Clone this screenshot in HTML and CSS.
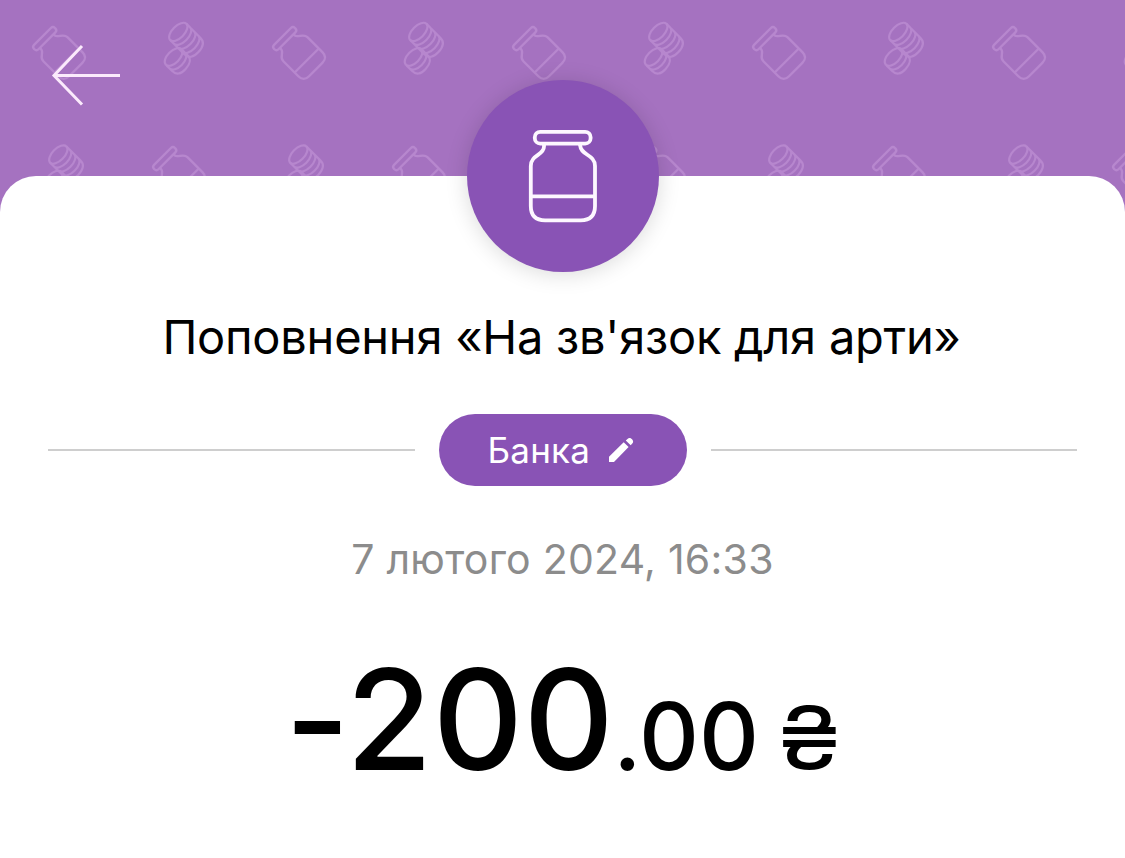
FILE: index.html
```html
<!DOCTYPE html>
<html lang="uk">
<head>
<meta charset="utf-8">
<title>Поповнення банки</title>
<link rel="stylesheet" href="styles.css">
</head>
<body>
<main class="screen">
  <svg class="backdrop" width="1125" height="240" viewBox="0 0 1125 240" aria-hidden="true">
    <defs>
      <g id="jar">
        <rect x="67.8" y="51.8" width="55.8" height="11.8" rx="5.4"/>
        <path d="M77 64v2.500c0 9-13.200 8-13.200 19.500v40q0 14.300 14.300 14.300h35.600q14.300 0 14.300-14.300V86c0-11.500-14-11-14.600-19.500l-.6-2.500M63.800 116.300H128"/>
      </g>
      <g id="stack-tall">
        <ellipse rx="6" ry="11.500"/>
        <path d="M0-11.500H20Q28-11.500 28.500 0T20 11.500H0M5.400-11.500a6 11.500 0 0 1 0 23M11.200-11.500a6 11.500 0 0 1 0 23M17-11.500a6 11.500 0 0 1 0 23"/>
      </g>
      <g id="stack-short">
        <ellipse rx="6" ry="11"/>
        <path d="M1-11H9Q16.500-11 17 0T9 11H1M5.500-11a6 11 0 0 1 0 22"/>
      </g>
      <g id="coins">
        <use href="#stack-tall" transform="rotate(45)"/>
        <use href="#stack-short" transform="translate(-4.7 25) rotate(45)"/>
      </g>
      <pattern id="motif" width="240" height="240" patternUnits="userSpaceOnUse">
        <g class="motif-lines">
          <use href="#jar" class="motif-jar" transform="translate(59.200 53) rotate(-45) scale(.53) translate(-95.9 -96.2)"/>
          <use href="#jar" class="motif-jar" transform="translate(179.200 173) rotate(-45) scale(.53) translate(-95.9 -96.2)"/>
          <use href="#coins" transform="translate(178.300 31.900)"/>
          <use href="#coins" transform="translate(58.300 154.600)"/>
        </g>
      </pattern>
    </defs>
    <rect width="1125" height="240" fill="url(#motif)"/>
  </svg>
  <header class="header">
    <svg class="back" width="70" height="64" viewBox="0 0 70 64" role="img" aria-label="Назад">
      <path d="M70 32.5H4M32 3L4 32.5 32 61.500"/>
    </svg>
  </header>
  <section class="card">
    <div class="avatar">
      <svg class="avatar-icon" width="192" height="192" viewBox="0 0 192 192" aria-hidden="true"><use href="#jar"/></svg>
    </div>
    <h1 class="title">Поповнення «На зв'язок для арти»</h1>
    <div class="category">
      <span class="rule"></span>
      <span class="pill">
        <span class="pill-label">Банка</span>
        <svg class="pencil" width="26" height="26" viewBox="0 0 26 26" aria-hidden="true">
          <path d="M1 25v-5.300L15.700 5.200l4.900 4.900L6 25zM17.800 3.600l1.700-1.700q1.200-1.200 2.800-.8 2.200.8 2.800 3 .2 1.600-.8 2.500l-1.600 1.600z"/>
        </svg>
      </span>
      <span class="rule"></span>
    </div>
    <p class="date">7 лютого 2024, 16:33</p>
    <p class="amount"><span class="whole">-200</span><span class="cents">.00</span><span class="currency">₴</span></p>
  </section>
</main>
</body>
</html>
```
FILE: styles.css
```css
body {
  margin: 0;
  font-family: Inter, "Liberation Sans", sans-serif;
}

.screen {
  position: relative;
  width: 1125px;
  height: 858px;
  overflow: hidden;
  background: #a572c0;
}

.backdrop {
  position: absolute;
  top: 0;
  left: 0;
}

.motif-lines {
  fill: none;
  stroke: #b787ce;
  stroke-width: 2.1;
  stroke-linejoin: round;
}

.motif-jar {
  stroke-width: 4.3;
}

.header {
  position: relative;
  box-sizing: border-box;
  height: 176px;
  padding: 43px 50px 0;
}

.back {
  display: block;
  fill: none;
  stroke: #fbeafc;
  stroke-width: 3;
}

.card {
  position: relative;
  display: flex;
  flex-direction: column;
  align-items: center;
  height: 682px;
  background: #fff;
  border-radius: 36px 36px 0 0;
}

.avatar {
  flex: none;
  width: 192px;
  height: 192px;
  margin-top: -96px;
  margin-left: 1px;
  border-radius: 50%;
  background: #8953b5;
  box-shadow: 0 2px 22px rgba(0, 0, 0, .15);
}

.avatar-icon {
  display: block;
  fill: none;
  stroke: #fdf7ff;
  stroke-width: 3.8;
}

.title {
  margin: 37px 2px 0 0;
  font-size: 47px;
  line-height: 56px;
  font-weight: 400;
  letter-spacing: -.25px;
  color: #000;
  white-space: nowrap;
}

.category {
  display: flex;
  align-items: center;
  align-self: stretch;
  gap: 24px;
  margin: 49px 48px 0;
}

.rule {
  flex: 1;
  height: 2px;
  background: #cecece;
}

.pill {
  display: flex;
  align-items: center;
  box-sizing: border-box;
  width: 248px;
  height: 72px;
  padding: 0 49px;
  justify-content: space-between;
  border-radius: 36px;
  background: #8953b5;
  color: #fff;
}

.pill-label {
  font-size: 35px;
  line-height: 42px;
  font-weight: 400;
  letter-spacing: .2px;
}

.pencil {
  margin-right: 4px;
  fill: #fff;
}

.date {
  margin: 48px 0 0;
  font-size: 41px;
  line-height: 50px;
  letter-spacing: .25px;
  color: #8c8c8c;
  white-space: nowrap;
}

.amount {
  display: flex;
  align-items: baseline;
  margin: 50px 3px 0 0;
  line-height: 170px;
  font-weight: 500;
  font-feature-settings: "calt" 0;
  color: #000;
  white-space: nowrap;
}

.whole {
  font-size: 140px;
  letter-spacing: .4px;
}

.cents {
  margin-left: -1px;
  font-size: 93px;
}

.currency {
  margin-left: 23px;
  font-size: 87px;
  font-weight: 400;
  transform: translateY(-1px) scaleX(1.15);
}
```
